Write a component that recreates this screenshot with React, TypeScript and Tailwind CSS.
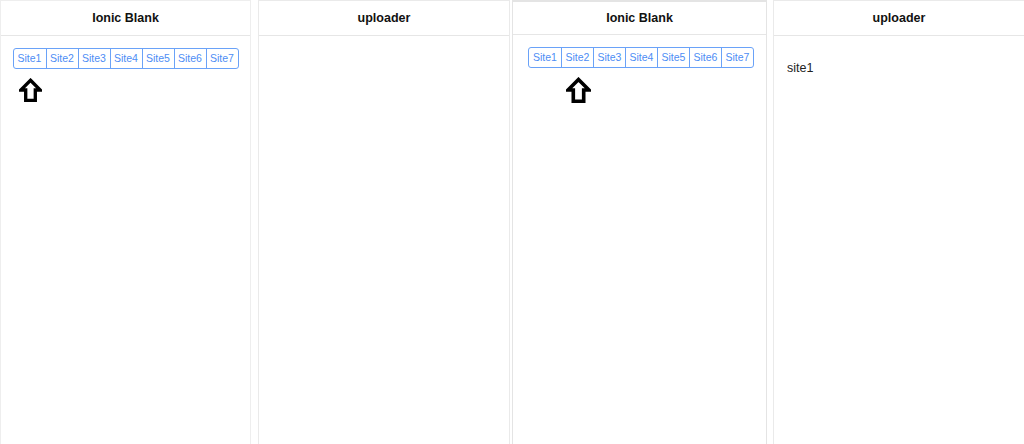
import React from "react";

const sites = ["Site1", "Site2", "Site3", "Site4", "Site5", "Site6", "Site7"];

function Arrow({ w, h }: { w: number; h: number }) {
  return (
    <svg width={w} height={h} viewBox="0 0 22 23" fill="none">
      <polygon
        points="11,2.2 20.3,11.5 15.6,11.5 15.6,21.4 6.4,21.4 6.4,11.5 1.7,11.5"
        stroke="#000"
        strokeWidth="3.2"
        strokeLinejoin="miter"
        fill="#fff"
      />
    </svg>
  );
}

function Header({ title, h = 35 }: { title: string; h?: number }) {
  return (
    <div
      className={
        (h === 35 ? "h-[35px]" : "h-[33px]") +
        " border-b border-[#e6e6e6] flex items-center justify-center"
      }
    >
      <span className="text-[12.5px] font-bold text-[#111]">{title}</span>
    </div>
  );
}

function Segment({
  active,
  arrowW,
  arrowH,
  shift,
}: {
  active: number;
  arrowW: number;
  arrowH: number;
  shift: boolean;
}) {
  return (
    <div className={"flex flex-col items-center pt-[12px] " + (shift ? "pl-[3px]" : "")}>
      <div className="flex">
        <div className="flex h-[21px] border border-[#6aa2f8] rounded-[3px] overflow-hidden">
          {sites.map((s, i) => (
            <div
              key={s}
              className={
                "w-[32px] flex items-center justify-center text-[10.5px] text-[#4d8df5] " +
                (i > 0 ? "border-l border-[#6aa2f8]" : "")
              }
            >
              {s}
            </div>
          ))}
        </div>
      </div>
      <div className="w-[224px] flex pt-[9px]">
        <div
          className="flex justify-center w-[32px] pl-[2px]"
          style={{ marginLeft: active * 32 }}
        >
          <Arrow w={arrowW} h={arrowH} />
        </div>
      </div>
    </div>
  );
}

export default function App() {
  return (
    <div
      className="w-[1024px] h-[444px] bg-white flex overflow-hidden"
      style={{ fontFamily: '"Liberation Sans", Arial, sans-serif' }}
    >
      <div className="w-[251px] h-full border-l border-t border-r border-[#eeeeee]">
        <Header title="Ionic Blank" />
        <Segment active={0} arrowW={23} arrowH={24} shift={false} />
      </div>
      <div className="w-[7px]" />
      <div className="w-[252px] h-full border-l border-t border-r border-[#eaeaea]">
        <Header title="uploader" />
      </div>
      <div className="w-[2px]" />
      <div className="w-[255px] h-full border-l border-t-2 border-r border-[#e4e4e4]">
        <Header title="Ionic Blank" h={33} />
        <Segment active={1} arrowW={25} arrowH={26} shift={true} />
      </div>
      <div className="w-[6px]" />
      <div className="flex-1 h-full border-l border-t border-[#eaeaea]">
        <Header title="uploader" />
        <div className="px-[13px] pt-[23px] text-[12.5px] text-[#222]">site1</div>
      </div>
    </div>
  );
}
